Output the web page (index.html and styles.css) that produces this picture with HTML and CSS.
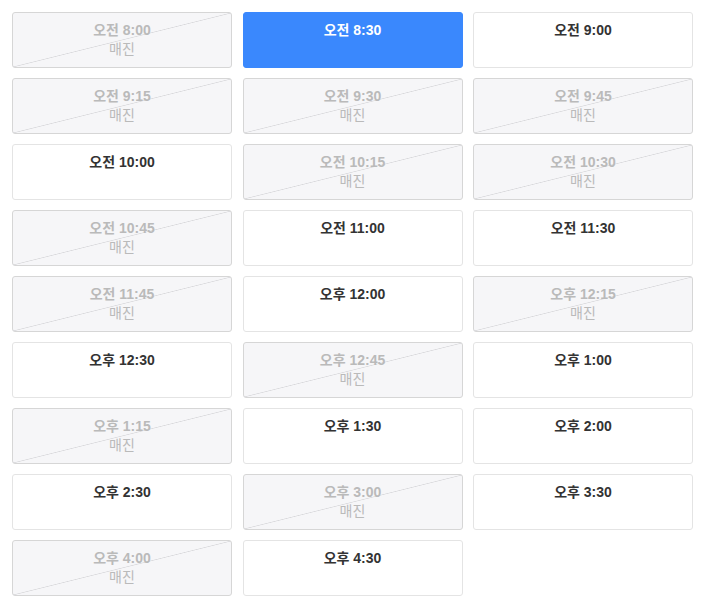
FILE: index.html
```html
<!DOCTYPE html>
<html lang="ko">
<head>
<meta charset="UTF-8">
<meta name="viewport" content="width=device-width, initial-scale=1.0">
<title>시간 선택</title>
<link rel="stylesheet" href="styles.css">
</head>
<body>

<div class="slot-grid">
    <button class="slot sold-out"><span class="time">오전 8:00</span><span class="status">매진</span></button>
    <button class="slot selected"><span class="time">오전 8:30</span></button>
    <button class="slot"><span class="time">오전 9:00</span></button>

    <button class="slot sold-out"><span class="time">오전 9:15</span><span class="status">매진</span></button>
    <button class="slot sold-out"><span class="time">오전 9:30</span><span class="status">매진</span></button>
    <button class="slot sold-out"><span class="time">오전 9:45</span><span class="status">매진</span></button>

    <button class="slot"><span class="time">오전 10:00</span></button>
    <button class="slot sold-out"><span class="time">오전 10:15</span><span class="status">매진</span></button>
    <button class="slot sold-out"><span class="time">오전 10:30</span><span class="status">매진</span></button>

    <button class="slot sold-out"><span class="time">오전 10:45</span><span class="status">매진</span></button>
    <button class="slot"><span class="time">오전 11:00</span></button>
    <button class="slot"><span class="time">오전 11:30</span></button>

    <button class="slot sold-out"><span class="time">오전 11:45</span><span class="status">매진</span></button>
    <button class="slot"><span class="time">오후 12:00</span></button>
    <button class="slot sold-out"><span class="time">오후 12:15</span><span class="status">매진</span></button>

    <button class="slot"><span class="time">오후 12:30</span></button>
    <button class="slot sold-out"><span class="time">오후 12:45</span><span class="status">매진</span></button>
    <button class="slot"><span class="time">오후 1:00</span></button>

    <button class="slot sold-out"><span class="time">오후 1:15</span><span class="status">매진</span></button>
    <button class="slot"><span class="time">오후 1:30</span></button>
    <button class="slot"><span class="time">오후 2:00</span></button>

    <button class="slot"><span class="time">오후 2:30</span></button>
    <button class="slot sold-out"><span class="time">오후 3:00</span><span class="status">매진</span></button>
    <button class="slot"><span class="time">오후 3:30</span></button>

    <button class="slot sold-out"><span class="time">오후 4:00</span><span class="status">매진</span></button>
    <button class="slot"><span class="time">오후 4:30</span></button>
</div>

</body>
</html>
```

FILE: styles.css
```css
body {
    margin: 0;
    padding: 12px 20px 12px 12px;
    background-color: #fff;
    font-family: "Liberation Sans", Arial, "Noto Sans CJK KR", sans-serif;
}

.slot-grid {
    display: grid;
    grid-template-columns: repeat(3, 1fr);
    column-gap: 10.5px;
    row-gap: 10px;
}

.slot {
    display: flex;
    flex-direction: column;
    align-items: center;
    height: 56px;
    padding: 8px 4px 0;
    border: 1px solid #e4e4e4;
    border-radius: 3px;
    background-color: #fff;
    color: #333;
    font-family: inherit;
    font-size: 14px;
    line-height: 19px;
    cursor: pointer;
}

.slot .time {
    font-weight: bold;
}

.slot.selected {
    border-color: #3a88fd;
    background-color: #3a88fd;
    color: #fff;
}

.slot.sold-out {
    border-color: #d6d6d6;
    background-color: #f6f6f8;
    background-image: linear-gradient(to bottom right, transparent calc(50% - 0.7px), #d9d9dc 50%, transparent calc(50% + 0.7px));
    color: #bababa;
    cursor: default;
}
```
